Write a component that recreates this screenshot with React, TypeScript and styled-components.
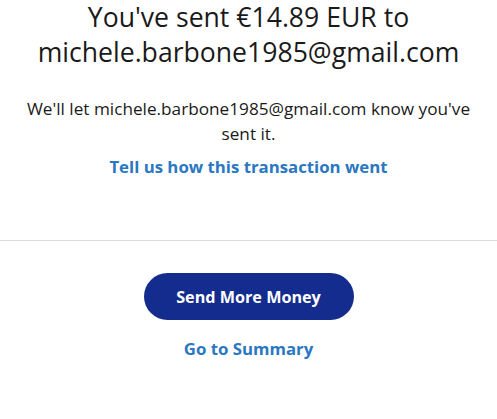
import React from 'react';
import styled, {createGlobalStyle} from "styled-components";

const GlobalStyle = createGlobalStyle`
  * {
    box-sizing: border-box;
  }
  body {
    margin: 0;
    background: #ffffff;
    font-family: "Open Sans", "Noto Sans", sans-serif;
    color: #1a1a1a;
  }
`

export default function App() {
    return (
        <>
            <GlobalStyle/>
            <Page>
                <Top>
                    <Headline>You've sent €14.89 EUR to michele.barbone1985@gmail.com</Headline>
                    <Note>We'll let michele.barbone1985@gmail.com know you've sent it.</Note>
                    <TextLink href="#">Tell us how this transaction went</TextLink>
                </Top>
                <Divider/>
                <Actions>
                    <PrimaryButton>Send More Money</PrimaryButton>
                    <TextLink href="#">Go to Summary</TextLink>
                </Actions>
            </Page>
        </>
    );
}

const Page = styled.main`
  display: flex;
  flex-direction: column;
  width: 497px;
  height: 419px;
`

const Top = styled.section`
  display: flex;
  flex-direction: column;
  align-items: center;
  padding: 0 16px;
  text-align: center;
`

const Headline = styled.h1`
  margin: 0;
  font-weight: 400;
  font-size: 26.6px;
  line-height: 35px;
  width: 465px;
`

const Note = styled.p`
  margin: 26px 0 0;
  font-size: 17.2px;
  font-weight: 500;
  line-height: 25px;
  width: 462px;
`

const TextLink = styled.a`
  display: inline-block;
  margin-top: 10px;
  font-size: 16.8px;
  line-height: 22px;
  font-weight: 700;
  color: #2a77c2;
  text-decoration: none;
`

const Divider = styled.hr`
  margin: 62px 0 0;
  border: none;
  border-top: 1px solid #dcdcdc;
`

const Actions = styled.section`
  display: flex;
  flex-direction: column;
  align-items: center;
  padding-top: 32px;
  gap: 8px;
`

const PrimaryButton = styled.button`
  width: 210px;
  height: 47px;
  border: none;
  border-radius: 24px;
  background: #142c8e;
  color: #ffffff;
  font-family: inherit;
  font-size: 16.2px;
  font-weight: 700;
  cursor: pointer;
`
